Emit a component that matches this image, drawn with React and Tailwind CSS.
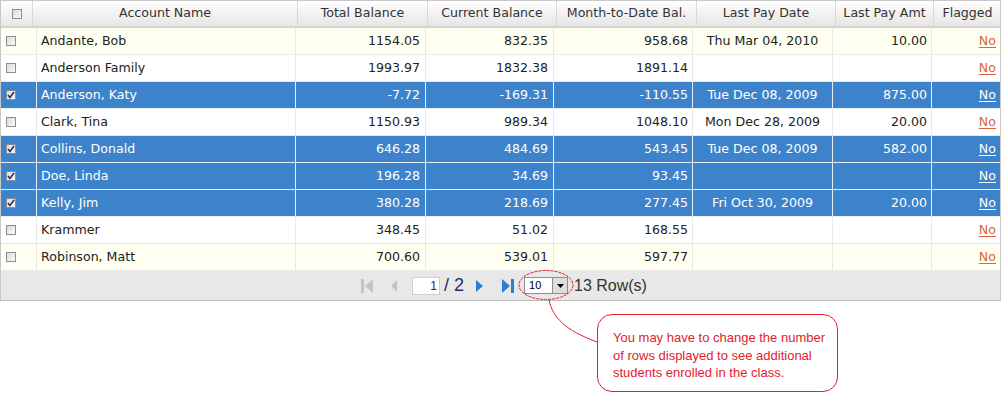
import React from 'react';

const rows = [
  { name: 'Andante, Bob', total: '1154.05', current: '832.35', mtd: '958.68', date: 'Thu Mar 04, 2010', amt: '10.00', tone: 'alt' },
  { name: 'Anderson Family', total: '1993.97', current: '1832.38', mtd: '1891.14', date: '', amt: '', tone: 'plain' },
  { name: 'Anderson, Katy', total: '-7.72', current: '-169.31', mtd: '-110.55', date: 'Tue Dec 08, 2009', amt: '875.00', tone: 'sel' },
  { name: 'Clark, Tina', total: '1150.93', current: '989.34', mtd: '1048.10', date: 'Mon Dec 28, 2009', amt: '20.00', tone: 'plain' },
  { name: 'Collins, Donald', total: '646.28', current: '484.69', mtd: '543.45', date: 'Tue Dec 08, 2009', amt: '582.00', tone: 'sel' },
  { name: 'Doe, Linda', total: '196.28', current: '34.69', mtd: '93.45', date: '', amt: '', tone: 'sel' },
  { name: 'Kelly, Jim', total: '380.28', current: '218.69', mtd: '277.45', date: 'Fri Oct 30, 2009', amt: '20.00', tone: 'sel' },
  { name: 'Krammer', total: '348.45', current: '51.02', mtd: '168.55', date: '', amt: '', tone: 'plain' },
  { name: 'Robinson, Matt', total: '700.60', current: '539.01', mtd: '597.77', date: '', amt: '', tone: 'alt' },
];

function Box({ checked }) {
  return (
    <span className="inline-flex h-[10px] w-[10px] items-center justify-center border border-[#8c8c8c] bg-gradient-to-br from-[#dcdcdc] to-[#fafafa]">
      {checked && (
        <svg width="8" height="8" viewBox="0 0 8 8">
          <path d="M1 4 L3 6.5 L7 1" fill="none" stroke="#1f2f7a" strokeWidth="1.6" />
        </svg>
      )}
    </span>
  );
}

const headCols = 'grid grid-cols-[32px_265px_130px_129px_140px_139px_98px_67px]';
const bodyCols = 'grid grid-cols-[36px_259px_130px_128px_139px_140px_99px_69px]';

export default function App() {
  return (
    <div className="relative h-[393px] w-[1001px] bg-white font-['DejaVu_Sans',sans-serif] text-[12.6px] text-[#222]">
      <div className="w-[1001px] border border-[#c8c8c8] border-b-[#bdbdbd]">
        <div className={`${headCols} h-[27px] border-b-2 border-[#d4d4d4] bg-gradient-to-b from-[#ffffff] to-[#e6e6e6] text-[#333]`}>
          <div className="flex items-center justify-center border-r border-[#d8d8d8]"><Box /></div>
          <div className="flex items-center justify-center border-r border-[#d8d8d8]">Account Name</div>
          <div className="flex items-center justify-center border-r border-[#d8d8d8]">Total Balance</div>
          <div className="flex items-center justify-center border-r border-[#d8d8d8]">Current Balance</div>
          <div className="flex items-center justify-center border-r border-[#d8d8d8]">Month-to-Date Bal.</div>
          <div className="flex items-center justify-center border-r border-[#d8d8d8]">Last Pay Date</div>
          <div className="flex items-center justify-center border-r border-[#d8d8d8]">Last Pay Amt</div>
          <div className="flex items-center justify-center">Flagged</div>
        </div>
        {rows.map((r) => {
          const sel = r.tone === 'sel';
          const bg = sel ? 'bg-[#3d83cb] text-white' : r.tone === 'alt' ? 'bg-[#fefff0]' : 'bg-white';
          const line = sel ? 'border-[#e6eef7]' : 'border-[#e8e8e8]';
          return (
            <div key={r.name} className={`${bodyCols} h-[27px] border-b ${line} ${bg}`}>
              <div className={`flex items-center pl-[5px] border-r ${line}`}><Box checked={sel} /></div>
              <div className={`flex items-center pl-[4px] border-r ${line}`}>{r.name}</div>
              <div className={`flex items-center justify-end pr-[5px] border-r ${line}`}>{r.total}</div>
              <div className={`flex items-center justify-end pr-[5px] border-r ${line}`}>{r.current}</div>
              <div className={`flex items-center justify-end pr-[4px] border-r ${line}`}>{r.mtd}</div>
              <div className={`flex items-center justify-center border-r ${line}`}>{r.date}</div>
              <div className={`flex items-center justify-end pr-[4px] border-r ${line}`}>{r.amt}</div>
              <div className="flex items-center justify-end pr-[5px]">
                <span className={`underline underline-offset-2 ${sel ? 'text-white' : 'text-[#d9653b]'}`}>No</span>
              </div>
            </div>
          );
        })}
        <div className="flex h-[29px] items-center bg-[#e8e8e8] pl-[359px] font-['Liberation_Sans',sans-serif] text-[16px] text-[#333]">
          <svg width="14" height="16" viewBox="0 0 14 16" className="mr-[15px]">
            <rect x="1" y="1" width="3" height="14" fill="#c4c4c4" />
            <path d="M13 1 L5 8 L13 15 Z" fill="#c4c4c4" />
          </svg>
          <svg width="10" height="16" viewBox="0 0 10 16" className="mr-[13px]">
            <path d="M8 2 L2 8 L8 14 Z" fill="#c4c4c4" />
          </svg>
          <div className="flex h-[18px] w-[28px] items-center justify-end border border-[#cfcfcf] bg-white pr-[2px] text-[12px] text-[#3a1a6a]">1</div>
          <span className="ml-[4px] mr-[10px] text-[18px] text-[#2a2a6a]">/ 2</span>
          <svg width="10" height="16" viewBox="0 0 10 16" className="mr-[17px]">
            <path d="M2 2 L9 8 L2 14 Z" fill="#2a7ed8" />
          </svg>
          <svg width="14" height="16" viewBox="0 0 14 16" className="mr-[9px]">
            <path d="M1 1 L9 8 L1 15 Z" fill="#2a7ed8" />
            <rect x="10" y="1" width="3" height="14" fill="#2a7ed8" />
          </svg>
          <div className="flex h-[17px] w-[44px] items-center border border-[#8e8e8e] bg-white">
            <span className="flex-1 pl-[4px] text-[11px] text-black">10</span>
            <span className="flex h-[15px] w-[15px] items-center justify-center border-l border-[#8e8e8e] bg-[#dedede]">
              <svg width="7" height="4" viewBox="0 0 7 4"><path d="M0 0 L7 0 L3.5 4 Z" fill="#000" /></svg>
            </span>
          </div>
          <span className="ml-[6px] text-[16px]">13 Row(s)</span>
        </div>
      </div>
      <svg className="absolute left-0 top-0" width="1001" height="393" viewBox="0 0 1001 393" fill="none">
        <ellipse cx="546" cy="285" rx="27" ry="14.5" stroke="#e0222c" strokeWidth="1" strokeDasharray="3 1" />
        <path d="M549 300 C 553 318, 565 330, 597 342" stroke="#e0222c" strokeWidth="1" />
      </svg>
      <div className="absolute left-[597px] top-[314px] h-[78px] w-[241px] rounded-[15px] border border-[#e0222c] bg-white pl-[15px] pr-[4px] pt-[14px] font-['Liberation_Sans',sans-serif] text-[13px] leading-[17.5px] text-[#e0222c]">
        You may have to change the number of rows displayed to see additional students enrolled in the class.
      </div>
    </div>
  );
}
